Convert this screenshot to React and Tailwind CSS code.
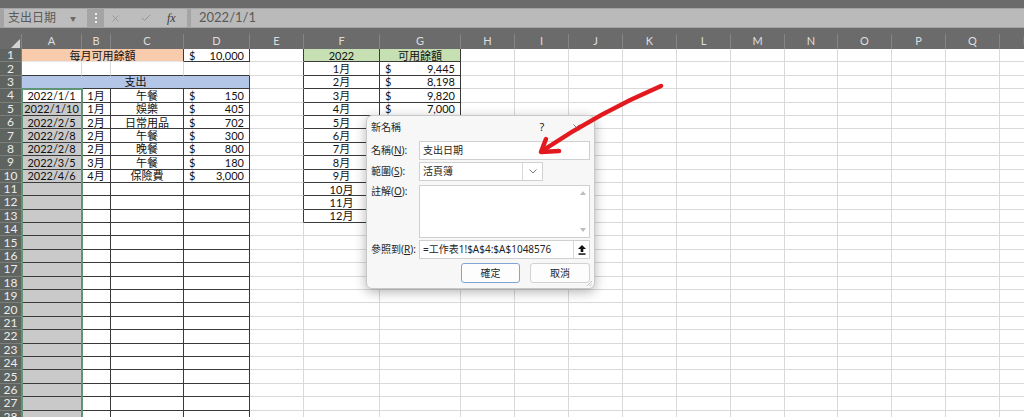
import { X, Check } from 'lucide-react'

const GRID = 'border-r-[#d9d9d9] border-b-[#d9d9d9]'
const DARK = 'border-r-[#3a3a3a] border-b-[#3a3a3a]'

const COLS = [
  ['A', 'w-[60px]'], ['B', 'w-[29px]'], ['C', 'w-[73px]'], ['D', 'w-[66px]'],
  ['E', 'w-[54px]'], ['F', 'w-[76px]'], ['G', 'w-[81px]'], ['H', 'w-[54px]'],
  ['I', 'w-[54px]'], ['J', 'w-[54px]'], ['K', 'w-[54px]'], ['L', 'w-[54px]'],
  ['M', 'w-[54px]'], ['N', 'w-[53px]'], ['O', 'w-[54px]'], ['P', 'w-[54px]'],
  ['Q', 'w-[54px]'], ['R', 'w-[54px]'],
]
const W = Object.fromEntries(COLS)

const spending = [
  ['2022/1/1', '1月', '午餐', '150'],
  ['2022/1/10', '1月', '娛樂', '405'],
  ['2022/2/5', '2月', '日常用品', '702'],
  ['2022/2/8', '2月', '午餐', '300'],
  ['2022/2/8', '2月', '晚餐', '800'],
  ['2022/3/5', '3月', '午餐', '180'],
  ['2022/4/6', '4月', '保險費', '3,000'],
]
const balance = ['9,445', '8,198', '9,820', '7,000']

function Cell({ w, cls = GRID, align = 'justify-center', children }) {
  return (
    <div className={`${w} h-full shrink-0 border-r border-b flex items-center ${align} ${cls}`}>
      {children}
    </div>
  )
}

function Money({ value }) {
  return (
    <>
      <span>$</span>
      <span>{value}</span>
    </>
  )
}

function Row({ r }) {
  const cells = []

  // A..D block
  if (r === 1) {
    cells.push(
      <Cell key="ac" w="w-[162px]" cls="bg-[#f8cbad] border-r-[#3a3a3a] border-b-[#e6e6e6]">每月可用餘額</Cell>,
      <Cell key="d" w={W.D} cls={DARK} align="justify-between px-[5px]"><Money value="10,000" /></Cell>
    )
  } else if (r === 3) {
    cells.push(<Cell key="ad" w="w-[228px]" cls={`bg-[#b4c6e7] ${DARK}`}>支出</Cell>)
  } else {
    const data = r >= 4 && r <= 10 ? spending[r - 4] : null
    const border = r === 2 ? 'border-r-[#d9d9d9] border-b-[#3a3a3a]' : DARK
    const aBg = r === 4 ? 'bg-white' : r >= 5 ? 'bg-[#c9c9c9]' : ''
    cells.push(
      <Cell key="a" w={W.A} cls={`${border} ${aBg}`}>{data && data[0]}</Cell>,
      <Cell key="b" w={W.B} cls={border}>{data && data[1]}</Cell>,
      <Cell key="c" w={W.C} cls={border}>{data && data[2]}</Cell>,
      <Cell key="d" w={W.D} cls={border} align="justify-between px-[5px]">
        {data && <Money value={data[3]} />}
      </Cell>
    )
  }

  // E
  cells.push(
    <Cell key="e" w={W.E} cls={r <= 13 ? 'border-r-[#3a3a3a] border-b-[#d9d9d9]' : GRID} />
  )

  // F, G
  if (r === 1) {
    cells.push(
      <Cell key="f" w={W.F} cls={`bg-[#c6e0b4] ${DARK}`}>2022</Cell>,
      <Cell key="g" w={W.G} cls={`bg-[#c6e0b4] ${DARK}`}>可用餘額</Cell>
    )
  } else if (r <= 13) {
    const b = balance[r - 2]
    cells.push(
      <Cell key="f" w={W.F} cls={DARK}>{r - 1}月</Cell>,
      <Cell key="g" w={W.G} cls={DARK} align="justify-between px-[5px]">
        {b && <Money value={b} />}
      </Cell>
    )
  } else {
    cells.push(<Cell key="f" w={W.F} />, <Cell key="g" w={W.G} />)
  }

  // H..R
  COLS.slice(7).forEach(([k, w]) => cells.push(<Cell key={k} w={w} />))

  return (
    <div className="flex h-[13.4px]">
      <div className="w-[22px] h-full shrink-0 bg-[#5f6461] border-b border-r border-[#7b807d] text-[#ececec] text-[12px] leading-none flex items-center justify-center">
        {r}
      </div>
      {cells}
    </div>
  )
}

function FormulaBar() {
  return (
    <div className="h-[20px] bg-[#a4a4a4] flex items-center py-[1px] text-[#5a5a5a]">
      <div className="ml-[4px] w-[83px] h-full bg-[#bdbdbd] flex items-center pl-[4px] text-[12px]">
        <span className="flex-1">支出日期</span>
        <span className="text-[6px] mr-[11px] text-[#6a6a6a]">▼</span>
      </div>
      <div className="w-[17px] h-full flex flex-col items-center justify-center gap-[2px]">
        <div className="w-[2px] h-[2px] bg-[#ececec]" />
        <div className="w-[2px] h-[2px] bg-[#ececec]" />
        <div className="w-[2px] h-[2px] bg-[#ececec]" />
      </div>
      <div className="w-[83px] h-full bg-[#bdbdbd] flex items-center">
        <X size={11} strokeWidth={1.5} className="ml-[6px] text-[#8a8a8a]" />
        <Check size={12} strokeWidth={1.5} className="ml-[19px] text-[#8a8a8a]" />
        <span className="ml-[15px] italic font-['Liberation_Serif',serif] text-[12px] text-[#3c3c3c]">fx</span>
      </div>
      <div className="ml-[4px] flex-1 h-full bg-[#bababa] flex items-center pl-[8px] text-[13px]">
        2022/1/1
      </div>
    </div>
  )
}

function ColumnHeader() {
  return (
    <div className="flex h-[21px] bg-[#6b6b6b] items-end text-[#dedede] text-[11px]">
      <div className="w-[22px] h-[15px] shrink-0 flex items-end justify-end pr-[1px] pb-[1px] border-r border-[#858585]">
        <svg width="9" height="9" viewBox="0 0 9 9">
          <polygon points="9,0 9,9 0,9" fill="#d4d4d4" />
        </svg>
      </div>
      {COLS.map(([k, w]) => (
        <div key={k} className={`${w} h-[15px] shrink-0 border-r border-[#858585] flex items-center justify-center`}>
          {k}
        </div>
      ))}
    </div>
  )
}

function Label({ text, k }) {
  return (
    <div className="w-[48px] shrink-0 leading-[13px]">
      {text}(<span className="underline">{k}</span>):
    </div>
  )
}

function NameDialog() {
  return (
    <div className="absolute left-[366px] top-[115px] w-[229px] h-[174px] rounded-[6px] bg-[#f7f7f7] border border-[#c8c8c8] shadow-[0_3px_12px_rgba(0,0,0,0.3)] px-[4px] text-[10px] text-[#262626] font-['Noto_Sans','Noto_Sans_CJK_TC',sans-serif] flex flex-col">
      <div className="h-[22px] flex items-center">
        <span className="flex-1">新名稱</span>
        <span className="w-[10px] text-center text-[11px]">?</span>
        <X size={11} strokeWidth={1.3} className="ml-[24px] mr-[8px] text-[#333]" />
      </div>

      <div className="mt-[3px] h-[19px] flex items-center">
        <Label text="名稱" k="N" />
        <div className="flex-1 h-full bg-white border border-[#d0d0d0] flex items-center pl-[3px]">支出日期</div>
      </div>

      <div className="mt-[2px] h-[19px] flex items-center">
        <Label text="範圍" k="S" />
        <div className="w-[124px] h-full bg-white border border-[#d0d0d0] flex items-center">
          <span className="flex-1 pl-[3px]">活頁簿</span>
          <div className="w-[20px] h-full border-l border-[#d8d8d8] flex items-center justify-center">
            <svg width="8" height="5" viewBox="0 0 8 5">
              <polyline points="0.5,0.5 4,4 7.5,0.5" fill="none" stroke="#777" strokeWidth="1" />
            </svg>
          </div>
        </div>
      </div>

      <div className="mt-[4px] h-[53px] flex items-start">
        <Label text="註解" k="O" />
        <div className="flex-1 h-full bg-white border border-[#d0d0d0] flex justify-end">
          <div className="w-[13px] h-full flex flex-col items-center justify-between py-[5px]">
            <svg width="6" height="4" viewBox="0 0 6 4"><polygon points="3,0 6,4 0,4" fill="#bdbdbd" /></svg>
            <svg width="6" height="4" viewBox="0 0 6 4"><polygon points="0,0 6,0 3,4" fill="#bdbdbd" /></svg>
          </div>
        </div>
      </div>

      <div className="mt-[2px] h-[19px] flex items-center">
        <Label text="參照到" k="R" />
        <div className="flex-1 h-full bg-white border border-[#d0d0d0] flex items-center">
          <span className="flex-1 pl-[3px] whitespace-nowrap">=工作表1!$A$4:$A$1048576</span>
          <div className="w-[16px] h-full border-l border-[#d8d8d8] flex items-center justify-center">
            <svg width="8" height="10" viewBox="0 0 8 10">
              <polygon points="4,0 8,4 5.3,4 5.3,7 2.7,7 2.7,4 0,4" fill="#111" />
              <rect x="0.5" y="8.3" width="7" height="1.5" fill="#111" />
            </svg>
          </div>
        </div>
      </div>

      <div className="mt-[4px] h-[20px] flex justify-end gap-[10px]">
        <div className="w-[59px] h-full rounded-[3px] bg-[#fdfdfd] border border-[#7ea6d6] flex items-center justify-center">確定</div>
        <div className="w-[60px] h-full rounded-[3px] bg-[#fdfdfd] border border-[#d2d2d2] flex items-center justify-center">取消</div>
      </div>

      <svg className="absolute right-[2px] bottom-[2px]" width="6" height="6" viewBox="0 0 6 6">
        <line x1="6" y1="1" x2="1" y2="6" stroke="#b5b5b5" strokeWidth="0.8" />
        <line x1="6" y1="3.5" x2="3.5" y2="6" stroke="#b5b5b5" strokeWidth="0.8" />
      </svg>
    </div>
  )
}

export default function App() {
  const rows = Array.from({ length: 28 }, (_, i) => i + 1)
  return (
    <div className="relative w-[1024px] h-[417px] overflow-hidden bg-white font-['Lato','Noto_Sans_CJK_TC',sans-serif]">
      <div className="h-[8px] bg-[#6b6b6b]" />
      <FormulaBar />
      <ColumnHeader />

      <div className="relative text-[11px] leading-none text-[#111]">
        {rows.map((r) => <Row key={r} r={r} />)}
        {/* selection outline around A4:A1048576 */}
        <div className="absolute left-[21px] top-[39.2px] w-[62px] h-[400px] border-x-2 border-t-2 border-[#5f9474]" />
      </div>

      <NameDialog />

      <svg className="absolute left-0 top-0 pointer-events-none" width="1024" height="417">
        <path d="M661 86 Q600 112 542 151" fill="none" stroke="#e2191f" strokeWidth="4.5" strokeLinecap="round" />
        <path d="M546 139 L541 152 L559 151" fill="none" stroke="#e2191f" strokeWidth="4.5" strokeLinecap="round" strokeLinejoin="round" />
      </svg>
    </div>
  )
}
